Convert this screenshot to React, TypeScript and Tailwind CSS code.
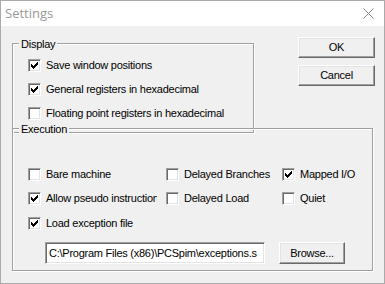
import React from 'react';

const ui = "font-['Liberation_Sans',Arial,sans-serif] text-[11px] leading-[13px] tracking-[-0.25px] text-black";

const CheckMark = () => (
  <svg width="7" height="7" viewBox="0 0 7 7" shapeRendering="crispEdges">
    {[2, 3, 4, 3, 2, 1, 0].map((y, x) => (
      <rect key={x} x={x} y={y} width="1" height="3" fill="#000" />
    ))}
  </svg>
);

const Check = ({ checked }: { checked?: boolean }) => (
  <span className="w-[13px] h-[13px] shrink-0 flex items-center justify-center bg-white border border-t-[#a0a0a0] border-l-[#a0a0a0] border-r-white border-b-white shadow-[inset_1px_1px_0_#696969,inset_-1px_-1px_0_#e3e3e3]">
    {checked && <CheckMark />}
  </span>
);

const CheckRow = ({ label, checked }: { label: string; checked?: boolean }) => (
  <div className="h-[24px] flex items-center gap-[5px]">
    <Check checked={checked} />
    <span className="whitespace-nowrap">{label}</span>
  </div>
);

const GroupBox = ({ label, className, children }: { label: string; className: string; children: React.ReactNode }) => (
  <div className={`relative border border-[#a0a0a0] shadow-[inset_1px_1px_0_#fff,1px_1px_0_#fff] ${className}`}>
    <span className="absolute left-[6px] top-[-6px] px-[2px] bg-[#f0f0f0] whitespace-nowrap">{label}</span>
    {children}
  </div>
);

const Button = ({ label, className }: { label: string; className: string }) => (
  <button className={`flex items-center justify-center bg-[#f0f0f0] border border-t-white border-l-white border-r-[#696969] border-b-[#696969] shadow-[inset_-1px_-1px_0_#a0a0a0,inset_1px_1px_0_#e3e3e3] ${className}`}>
    {label}
  </button>
);

export default function App() {
  return (
    <div className={`w-[385px] h-[284px] flex flex-col border border-[#aaaaaa] bg-white ${ui}`}>
      <div className="h-[25px] shrink-0 flex items-center justify-between bg-white pl-[4px] pr-[10px]">
        <span className="font-['Open_Sans',sans-serif] text-[13px] tracking-normal text-[#999999]">Settings</span>
        <svg width="11" height="11" viewBox="0 0 11 11">
          <path d="M0.5 0.5 L10.5 10.5 M10.5 0.5 L0.5 10.5" stroke="#8a8a8a" strokeWidth="1" />
        </svg>
      </div>

      <div className="flex-1 bg-[#f0f0f0] pl-[11px] pr-[9px] pt-[17px]">
        <div className="flex items-start">
          <GroupBox label="Display" className="w-[242px] h-[90px] pt-[9px] pl-[15px]">
            <CheckRow label="Save window positions" checked />
            <CheckRow label="General registers in hexadecimal" checked />
            <CheckRow label="Floating point registers in hexadecimal" />
          </GroupBox>
          <div className="ml-auto -mt-[6px] flex flex-col gap-[7px]">
            <Button label="OK" className="w-[77px] h-[21px]" />
            <Button label="Cancel" className="w-[77px] h-[21px]" />
          </div>
        </div>

        <GroupBox label="Execution" className="w-[361px] h-[143px] -mt-[5px] pt-[33px] pl-[15px]">
          <div className="grid grid-cols-[138px_116px_auto]">
            <div className="w-[129px] overflow-hidden">
              <CheckRow label="Bare machine" />
            </div>
            <CheckRow label="Delayed Branches" />
            <CheckRow label="Mapped I/O" checked />
            <div className="w-[129px] overflow-hidden">
              <CheckRow label="Allow pseudo instructions" checked />
            </div>
            <CheckRow label="Delayed Load" />
            <CheckRow label="Quiet" />
          </div>
          <div className="mt-[1px]">
            <CheckRow label="Load exception file" checked />
          </div>
          <div className="flex items-center mt-[7px] ml-[17px]">
            <div className="w-[220px] h-[22px] flex items-center pl-[3px] overflow-hidden whitespace-nowrap bg-white border border-t-[#a0a0a0] border-l-[#a0a0a0] border-r-white border-b-white shadow-[inset_1px_1px_0_#696969,inset_-1px_-1px_0_#e3e3e3]">
              {'C:\\Program Files (x86)\\PCSpim\\exceptions.s'}
            </div>
            <Button label="Browse..." className="ml-[14px] w-[66px] h-[22px]" />
          </div>
        </GroupBox>
      </div>
    </div>
  );
}
